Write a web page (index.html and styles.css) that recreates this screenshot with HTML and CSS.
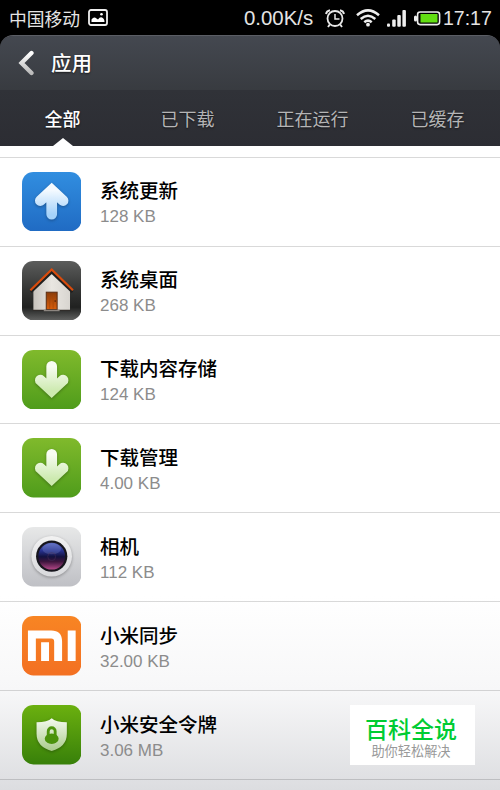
FILE: index.html
```html
<!DOCTYPE html>
<html lang="zh-CN">

<head>
    <meta charset="UTF-8">
    <meta name="viewport" content="width=device-width, initial-scale=1.0">
    <title>应用</title>
    <link rel="stylesheet" href="styles.css">
</head>

<body>
    <div class="screen">
        <div class="status-bar">
            <span class="carrier">中国移动</span>
            <svg class="picture-icon" width="20" height="17" viewBox="0 0 20 17">
                <rect x="1" y="1" width="18" height="15" rx="2" fill="none" stroke="#eee" stroke-width="1.8" />
                <path d="M3.500 13V10.500Q6 7 8.500 9.500L10 10.500Q12 7.500 14 8.500Q16.500 9.500 16.500 13Z" fill="#fff" />
                <circle cx="13.500" cy="5.200" r="1.300" fill="#fff" />
            </svg>
            <span class="speed">0.00K/s</span>
            <svg class="alarm-icon" width="20" height="19" viewBox="0 0 20 19" fill="none" stroke="#e8e8e8">
                <circle cx="10" cy="9.500" r="7.500" stroke-width="1.800" />
                <path d="M10 5V10H14.500" stroke-width="1.500" />
                <path d="M1 5Q1.500 2 5 1.200M19 5Q18.500 2 15 1.200M4.800 15.500L3 18M15.200 15.500L17 18" stroke-width="1.900" />
            </svg>
            <svg class="wifi-icon" width="24" height="18" viewBox="0 0 24 18" fill="none" stroke="#eee" stroke-width="2.500">
                <path d="M1 6.300Q12 -3.500 23 6.300M4.700 10Q12 3.500 19.300 10M8.300 13.300Q12 10 15.700 13.300" />
                <circle cx="12" cy="15.700" r="1.900" fill="#eee" stroke="none" />
            </svg>
            <svg class="signal-icon" width="19" height="17" viewBox="0 0 19 17" fill="#eee">
                <rect x="0" y="13.500" width="3" height="3.200" rx="1" />
                <rect x="5.200" y="9.500" width="3.500" height="7.200" rx="1" />
                <rect x="10.300" y="5" width="3.500" height="11.700" rx="1" />
                <rect x="15.400" y="0" width="3.500" height="16.700" rx="1" />
            </svg>
            <svg class="battery-icon" width="27" height="15" viewBox="0 0 27 15">
                <rect x="0" y="4.500" width="3" height="6" rx="1.500" fill="#eee" />
                <rect x="3.600" y="1" width="22" height="12.600" rx="2.500" fill="#000" stroke="#eee" stroke-width="1.600" />
                <rect x="6.500" y="3" width="17" height="8.500" fill="#62df12" />
            </svg>
            <span class="clock">17:17</span>
        </div>

        <div class="header">
            <div class="title-bar">
                <svg class="back-icon" width="17" height="26" viewBox="0 0 17 26">
                    <defs>
                        <linearGradient id="backFill" x1="0" y1="0" x2="0" y2="1">
                            <stop offset="0" stop-color="#fff" />
                            <stop offset="1" stop-color="#bbb" />
                        </linearGradient>
                    </defs>
                    <path d="M13.500 3L3.500 13L13.500 23" fill="none" stroke="url(#backFill)" stroke-width="4.300" stroke-linecap="round" />
                </svg>
                <h1>应用</h1>
            </div>
            <div class="tabs">
                <div class="tab active">全部</div>
                <div class="tab">已下载</div>
                <div class="tab">正在运行</div>
                <div class="tab">已缓存</div>
            </div>
        </div>

        <div class="app-list">
            <div class="app-row">
                <svg class="app-icon" viewBox="0 0 60 60">
                    <defs>
                        <linearGradient id="blueBg" x1="0" y1="0" x2="0" y2="1">
                            <stop offset="0" stop-color="#318ee0" />
                            <stop offset="1" stop-color="#206bc3" />
                        </linearGradient>
                        <linearGradient id="blueArrow" x1="0" y1="0" x2="0" y2="1">
                            <stop offset="0" stop-color="#f4faff" />
                            <stop offset="1" stop-color="#a5d2fa" />
                        </linearGradient>
                    </defs>
                    <rect width="60" height="60" rx="11.500" fill="url(#blueBg)" />
                    <path class="glyph arrow" d="M18.500 29L30 18.300L41.500 29M30 20V42.700" stroke="url(#blueArrow)" />
                </svg>
                <div class="app-info">
                    <div class="app-name">系统更新</div>
                    <div class="app-size">128 KB</div>
                </div>
            </div>

            <div class="app-row">
                <svg class="app-icon" viewBox="0 0 60 60">
                    <defs>
                        <linearGradient id="homeBg" x1="0" y1="0" x2="0" y2="1">
                            <stop offset="0" stop-color="#5c5d5c" />
                            <stop offset=".48" stop-color="#343534" />
                            <stop offset=".78" stop-color="#202120" />
                            <stop offset="1" stop-color="#626362" />
                        </linearGradient>
                        <linearGradient id="wall" x1="0" y1="0" x2="1" y2="0">
                            <stop offset="0" stop-color="#c6c2bc" />
                            <stop offset=".5" stop-color="#e9e6e1" />
                            <stop offset="1" stop-color="#d8d5d0" />
                        </linearGradient>
                        <linearGradient id="door" x1="0" y1="0" x2="0" y2="1">
                            <stop offset="0" stop-color="#8a3c0a" />
                            <stop offset="1" stop-color="#d95f0c" />
                        </linearGradient>
                    </defs>
                    <rect width="60" height="60" rx="11.500" fill="url(#homeBg)" />
                    <path d="M11.500 49.500V28L30 10.500L48.500 28V49.500Z" fill="url(#wall)" />
                    <path d="M9 31.500L30 11.500L51 31.500" fill="none" stroke="#20201f" stroke-width="2.500" />
                    <path d="M8.500 29.500L30 8.500L51.500 29.500" fill="none" stroke="#d94b0c" stroke-width="2.200" />
                    <rect x="24.500" y="31.500" width="11" height="17.500" fill="url(#door)" stroke="#5a2c13" />
                    <path d="M28 34V48M31.500 34V48" stroke="#a74508" stroke-width=".7" />
                    <circle cx="33.500" cy="40.500" r=".8" fill="#4c2006" />
                    <path d="M11 49.800H49" stroke="#302c29" stroke-width="1.200" />
                    <path d="M22 50H38" stroke="#8d8680" stroke-width="1.500" />
                </svg>
                <div class="app-info">
                    <div class="app-name">系统桌面</div>
                    <div class="app-size">268 KB</div>
                </div>
            </div>

            <div class="app-row">
                <svg class="app-icon" viewBox="0 0 60 60">
                    <defs>
                        <linearGradient id="greenBg" x1="0" y1="0" x2="0" y2="1">
                            <stop offset="0" stop-color="#80ba2c" />
                            <stop offset="1" stop-color="#4f9c1b" />
                        </linearGradient>
                        <linearGradient id="greenArrow" x1="0" y1="0" x2="0" y2="1">
                            <stop offset="0" stop-color="#f8fcf2" />
                            <stop offset="1" stop-color="#cdeab0" />
                        </linearGradient>
                    </defs>
                    <rect width="60" height="60" rx="11.500" fill="url(#greenBg)" />
                    <path class="glyph arrow" d="M18.500 30.500L30 41.200L41.500 30.500M30 39V16.500" stroke="url(#greenArrow)" />
                </svg>
                <div class="app-info">
                    <div class="app-name">下载内容存储</div>
                    <div class="app-size">124 KB</div>
                </div>
            </div>

            <div class="app-row">
                <svg class="app-icon" viewBox="0 0 60 60">
                    <rect width="60" height="60" rx="11.500" fill="url(#greenBg)" />
                    <path class="glyph arrow" d="M18.500 30.500L30 41.200L41.500 30.500M30 39V16.500" stroke="url(#greenArrow)" />
                </svg>
                <div class="app-info">
                    <div class="app-name">下载管理</div>
                    <div class="app-size">4.00 KB</div>
                </div>
            </div>

            <div class="app-row">
                <svg class="app-icon" viewBox="0 0 60 60">
                    <defs>
                        <linearGradient id="cameraBg" x1="0" y1="0" x2="0" y2="1">
                            <stop offset="0" stop-color="#e7e8e8" />
                            <stop offset="1" stop-color="#bfc0c5" />
                        </linearGradient>
                        <linearGradient id="ring" x1="0" y1="0" x2="0" y2="1">
                            <stop offset="0" stop-color="#f2f2f2" />
                            <stop offset="1" stop-color="#d8d9dc" />
                        </linearGradient>
                        <linearGradient id="lens" x1="0" y1="0" x2="0" y2="1">
                            <stop offset="0" stop-color="#5664bc" />
                            <stop offset=".3" stop-color="#26308c" />
                            <stop offset=".52" stop-color="#13123f" />
                            <stop offset=".7" stop-color="#3d153d" />
                            <stop offset="1" stop-color="#b24787" />
                        </linearGradient>
                    </defs>
                    <rect width="60" height="60" rx="11.500" fill="url(#cameraBg)" />
                    <circle class="lens-ring" cx="30" cy="29.500" r="20.500" fill="url(#ring)" />
                    <circle cx="30" cy="29.500" r="15.800" fill="#16151c" />
                    <circle cx="30" cy="29.500" r="13.500" fill="url(#lens)" />
                    <ellipse cx="30" cy="22" rx="9.500" ry="5.500" fill="#aab8f0" opacity=".2" />
                    <circle cx="30" cy="30" r="4" fill="none" stroke="#4c3059" stroke-width=".8" opacity=".6" />
                </svg>
                <div class="app-info">
                    <div class="app-name">相机</div>
                    <div class="app-size">112 KB</div>
                </div>
            </div>

            <div class="app-row">
                <svg class="app-icon" viewBox="0 0 60 60">
                    <defs>
                        <linearGradient id="orangeBg" x1="0" y1="0" x2="0" y2="1">
                            <stop offset="0" stop-color="#f88523" />
                            <stop offset="1" stop-color="#f37022" />
                        </linearGradient>
                    </defs>
                    <rect width="60" height="60" rx="11.500" fill="url(#orangeBg)" />
                    <!-- logo: outer arch, inner bar, right bar -->
                    <g fill="none" stroke="#fff" stroke-width="8">
                        <path d="M10 45.500V18.700H29.500Q36.500 18.700 36.500 26V45.500" />
                        <path d="M23.300 26.500V45.500M50.200 14.700V45.500" />
                    </g>
                </svg>
                <div class="app-info">
                    <div class="app-name">小米同步</div>
                    <div class="app-size">32.00 KB</div>
                </div>
            </div>

            <div class="app-row">
                <svg class="app-icon" viewBox="0 0 60 60">
                    <defs>
                        <linearGradient id="shieldBg" x1="0" y1="0" x2="0" y2="1">
                            <stop offset="0" stop-color="#6bb00f" />
                            <stop offset="1" stop-color="#38800a" />
                        </linearGradient>
                        <linearGradient id="shield" x1="0" y1="0" x2="0" y2="1">
                            <stop offset="0" stop-color="#f5faef" />
                            <stop offset="1" stop-color="#a9cb8b" />
                        </linearGradient>
                    </defs>
                    <rect width="60" height="60" rx="11.500" fill="url(#shieldBg)" />
                    <path class="glyph" d="M30 13.500Q34 17.500 45.300 17.500V29Q45.300 42 30 46.500Q14.700 42 14.700 29V17.500Q26 17.500 30 13.500Z" fill="url(#shield)" />
                    <path d="M26.500 32V26.500A3.500 3.500 0 0 1 33.500 26.500V32" fill="none" stroke="#4e950d" stroke-width="2.900" />
                    <ellipse cx="30" cy="34" rx="7" ry="5.300" fill="#4b920c" />
                </svg>
                <div class="app-info">
                    <div class="app-name">小米安全令牌</div>
                    <div class="app-size">3.06 MB</div>
                </div>
            </div>
        </div>

        <div class="watermark">
            <div class="watermark-title">百科全说</div>
            <div class="watermark-text">助你轻松解决</div>
        </div>
    </div>
</body>

</html>
```
FILE: styles.css
```css
body {
    margin: 0;
    background: #000;
    font-family: "Liberation Sans", "Noto Sans CJK SC", sans-serif;
}

.screen {
    position: relative;
    width: 500px;
    height: 790px;
    overflow: hidden;
    background: #000;
}

.status-bar {
    display: flex;
    align-items: center;
    height: 35px;
    padding: 1px 8px 0 9px;
    box-sizing: border-box;
    color: #e4e4e4;
    white-space: nowrap;
}

.status-bar svg {
    flex: none;
}

.carrier {
    width: 79px;
    font-size: 17.8px;
}

.speed {
    width: 73px;
    margin-left: 136px;
    font-size: 20.4px;
}

.picture-icon {
    margin-top: -2px;
}

.alarm-icon {
    margin-left: 8px;
}

.wifi-icon {
    margin-left: 11px;
}

.signal-icon {
    margin-left: 7px;
}

.battery-icon {
    margin-left: 8px;
    margin-top: 1px;
}

.clock {
    margin-left: 2px;
    font-size: 19.5px;
}

.header {
    height: 111px;
    border-radius: 13px 13px 0 0;
    overflow: hidden;
    box-sizing: border-box;
    border-top: 1px solid #5b5e65;
    background: #2d2e34;
    text-shadow: 0 1px 2px rgba(0, 0, 0, 0.6);
}

.title-bar {
    display: flex;
    align-items: center;
    height: 54px;
    padding-left: 18px;
    background: linear-gradient(#444850, #383b40);
}

h1 {
    margin: -3px 0 0 16px;
    font-size: 20.5px;
    font-weight: 500;
    color: #fff;
}

.tabs {
    display: flex;
    height: 56px;
    background: linear-gradient(#303238, #2c2d33);
}

.tab {
    position: relative;
    width: 125px;
    line-height: 60px;
    text-align: center;
    font-size: 18px;
    color: #b5b5b6;
}

.tab.active {
    font-weight: 500;
    color: #fff;
}

/* pointer under the selected tab */
.tab.active::after {
    content: "";
    position: absolute;
    left: 53px;
    bottom: 0;
    width: 20px;
    height: 8px;
    background: #fff;
    clip-path: polygon(50% 0, 100% 100%, 0 100%);
}

.app-list {
    height: 644px;
    padding-top: 10.8px;
    box-sizing: border-box;
    background: linear-gradient(#fff 0, #fff 450px, #f7f7f8 545px, #dcdde0 644px);
}

.app-row {
    display: flex;
    height: 88.9px;
    padding: 14px 0 0 21.6px;
    box-sizing: border-box;
    border-top: 1px solid rgba(0, 0, 0, 0.15);
}

.app-row:last-child {
    height: 89.9px;
    border-bottom: 1px solid rgba(0, 0, 0, 0.15);
}

.app-icon {
    flex: none;
    width: 59.4px;
    height: 59.4px;
}

.glyph,
.lens-ring {
    filter: drop-shadow(0 1.5px 1.5px rgba(0, 0, 0, 0.3));
}

.arrow {
    fill: none;
    stroke-width: 10.8;
    stroke-linecap: round;
}

.app-info {
    margin-left: 19px;
    padding-top: 5.4px;
}

.app-name {
    line-height: 28px;
    font-size: 19.5px;
    font-weight: 500;
    color: #000;
}

.app-size {
    line-height: 24px;
    font-size: 17px;
    color: #8c8c8c;
}

.watermark {
    position: absolute;
    left: 350px;
    top: 705px;
    width: 125px;
    height: 60px;
    padding-top: 11px;
    box-sizing: border-box;
    background: #fff;
    text-align: center;
}

.watermark-title {
    margin-left: -3px;
    line-height: 28px;
    font-size: 23px;
    font-weight: 500;
    color: #00cc33;
}

.watermark-text {
    margin-left: -3px;
    line-height: 15px;
    font-size: 13.2px;
    color: #999;
}
```
